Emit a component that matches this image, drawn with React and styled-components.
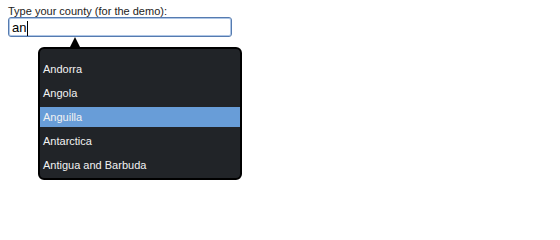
import React from 'react';
import styled, { createGlobalStyle } from 'styled-components';

const countries = ['Andorra', 'Angola', 'Anguilla', 'Antarctica', 'Antigua and Barbuda'];

const GlobalStyle = createGlobalStyle`
    body {
        margin: 0;
        background: #fff;
        font-family: "Liberation Sans", Arial, sans-serif;
    }
`

const Page = styled.div`
    padding: 5px 8px;
`

const Label = styled.div`
    font-size: 11px;
    line-height: 12px;
    color: #222;
`

const Field = styled.div`
    box-sizing: border-box;
    width: 224px;
    height: 20px;
    padding: 2px 2px 0 3px;
    border: 1px solid #557bb0;
    border-radius: 3px;
    box-shadow: inset 0 0 0 1px #aec6e6;
    font-size: 13px;
    line-height: 16px;
    color: #000;
    display: flex;
    align-items: center;
`

const Caret = styled.span`
    display: inline-block;
    width: 1px;
    height: 15px;
    margin-left: 1px;
    background: #000;
`

const Popup = styled.div`
    position: relative;
    box-sizing: border-box;
    width: 204px;
    margin: 10px 0 0 30px;
    padding: 10px 0 3px;
    background: #212428;
    border: 2px solid #000;
    border-radius: 6px;
`

const Arrow = styled.span`
    position: absolute;
    top: -12px;
    left: 30px;
    width: 0;
    height: 0;
    border-left: 5px solid transparent;
    border-right: 5px solid transparent;
    border-bottom: 10px solid #000;
`

const List = styled.ul`
    list-style: none;
    margin: 0;
    padding: 0;
    display: flex;
    flex-direction: column;
    gap: 4px;
`

const Item = styled.li`
    height: 20px;
    line-height: 20px;
    padding-left: 3px;
    font-size: 11px;
    color: #f2f2f2;
    background: ${(p) => (p.$active ? '#689dd8' : 'transparent')};
`

const App = () => {
    return (
        <Page>
            <GlobalStyle />
            <Label>Type your county (for the demo):</Label>
            <Field>
                an<Caret />
            </Field>
            <Popup>
                <Arrow />
                <List>
                    {countries.map((name) => (
                        <Item key={name} $active={name === 'Anguilla'}>{name}</Item>
                    ))}
                </List>
            </Popup>
        </Page>
    );
};

export default App;
